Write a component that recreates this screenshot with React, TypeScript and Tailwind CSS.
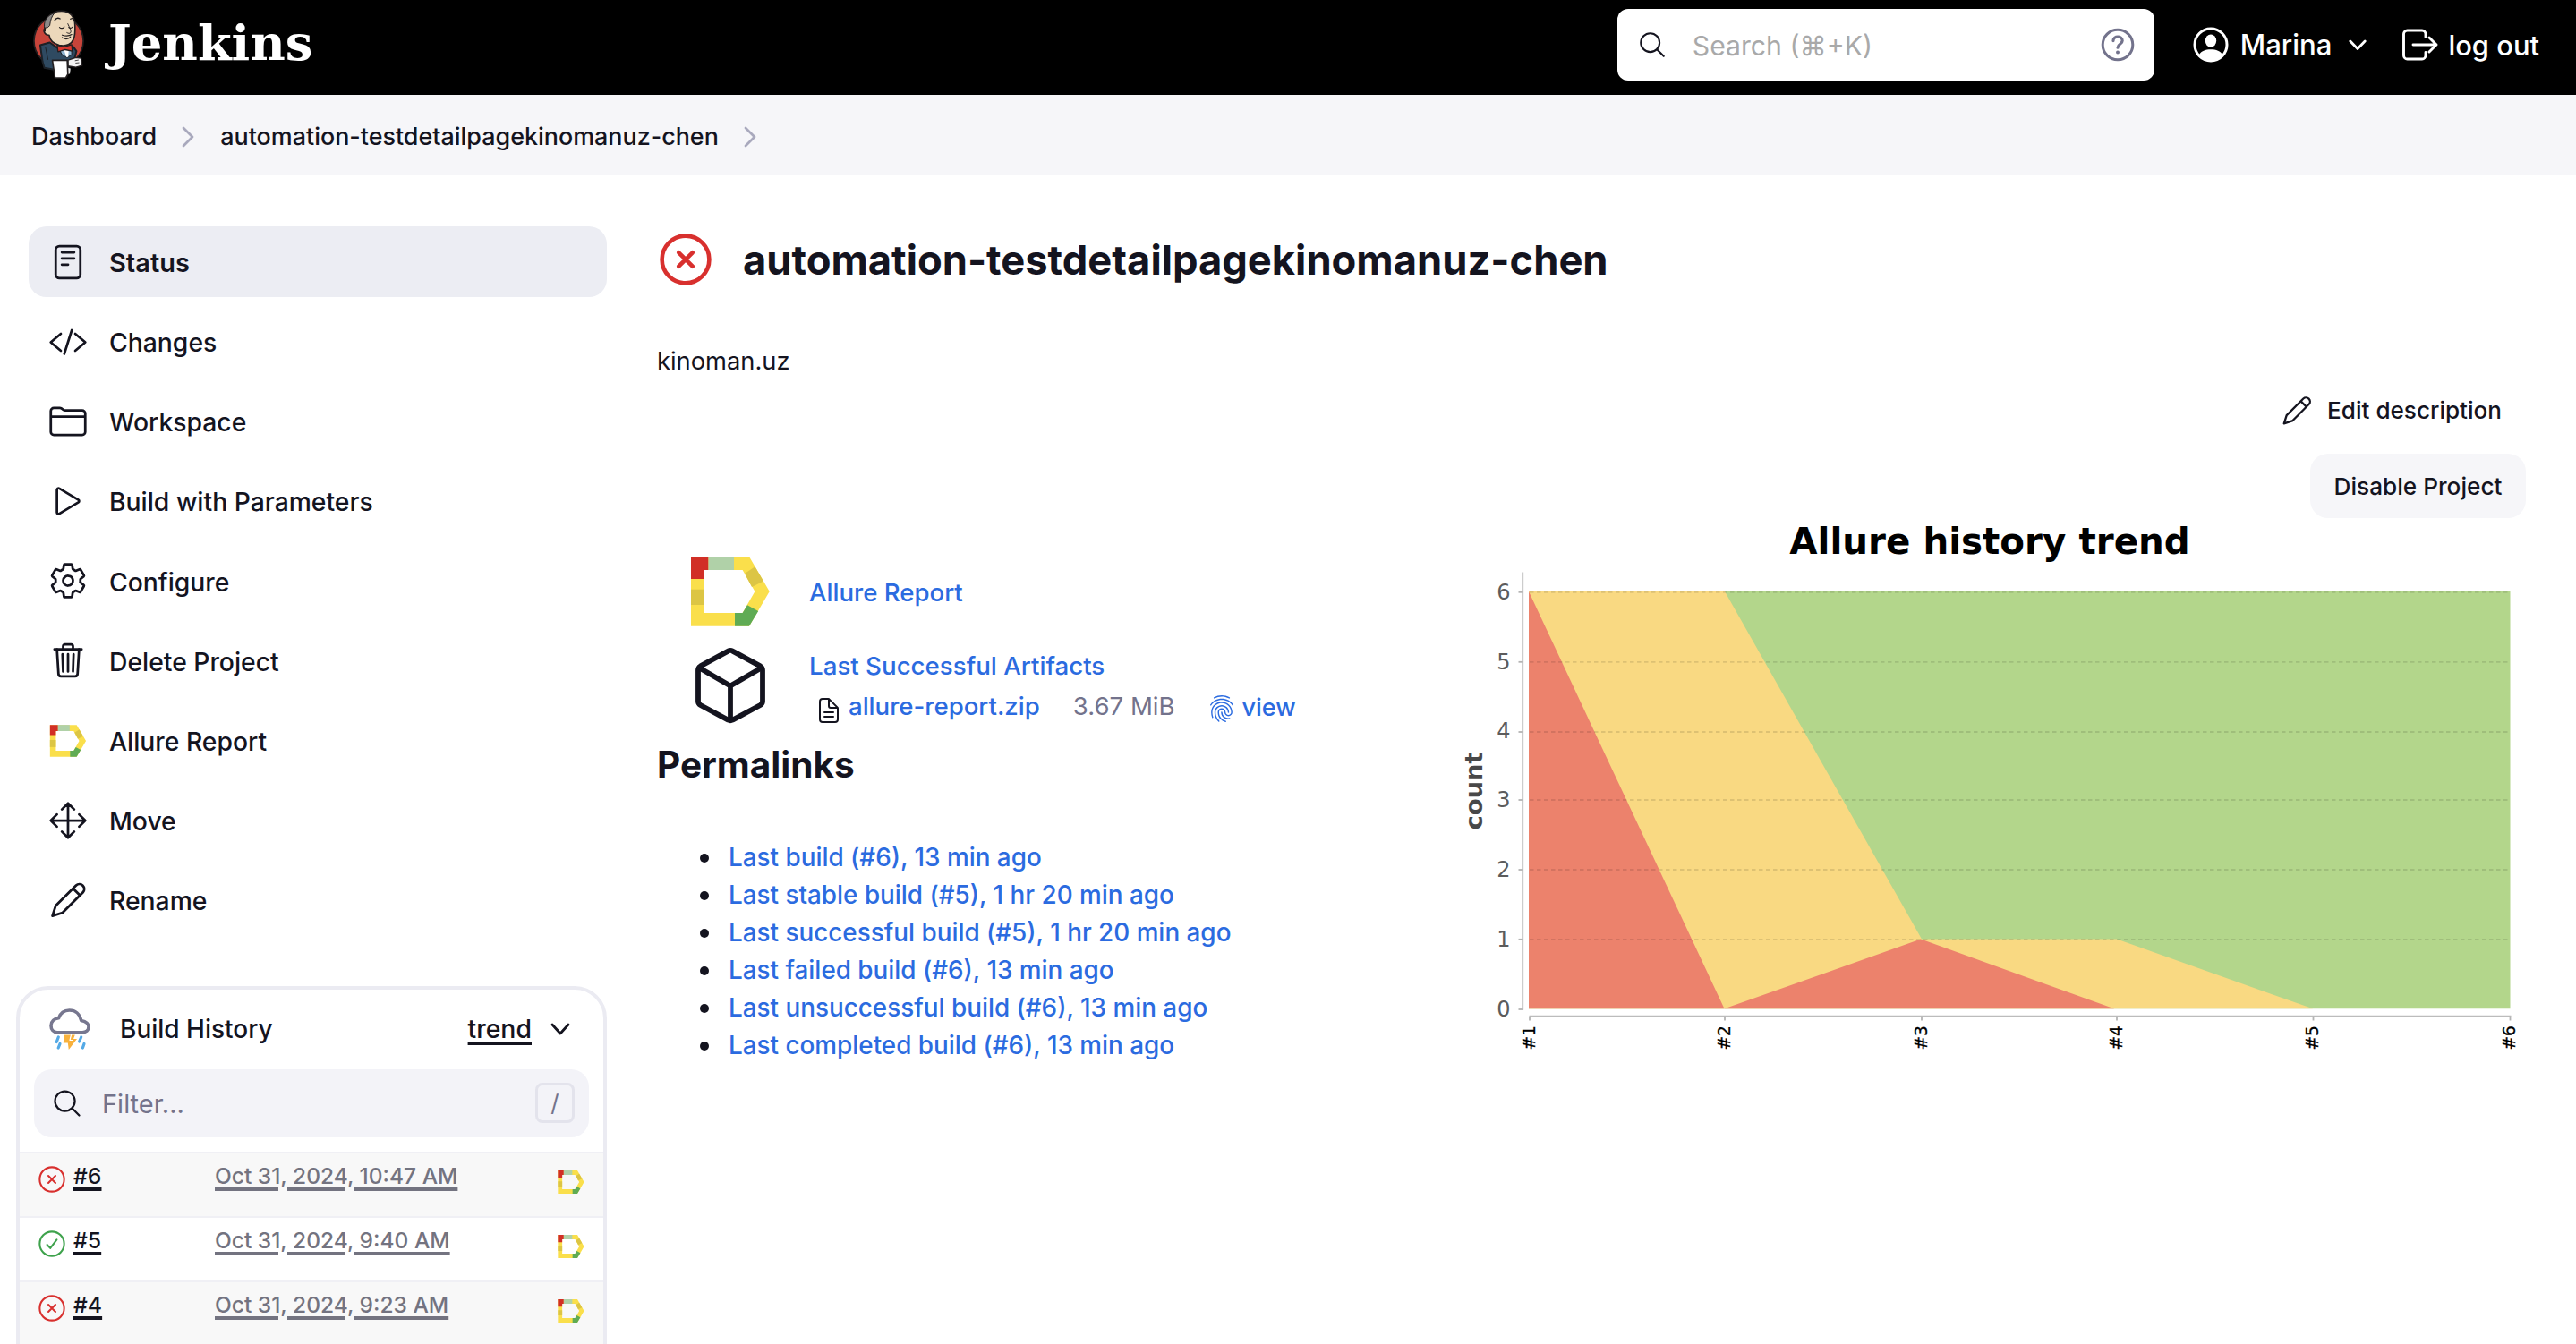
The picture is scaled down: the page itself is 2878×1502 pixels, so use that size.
import type { ReactNode } from "react";
import {
  IoDocumentTextOutline,
  IoFingerPrintOutline,
  IoFolderOutline,
  IoMoveOutline,
  IoPlayOutline,
  IoReaderOutline,
  IoSearchOutline,
  IoSettingsOutline,
  IoTrashOutline,
} from "react-icons/io5";

function Butler() {
  return (
    <svg className="h-[78px] w-[57px] shrink-0" viewBox="49 33 170 235" strokeLinejoin="round" strokeLinecap="round">
      <ellipse cx="134" cy="138" rx="83" ry="84" fill="#c8443a" stroke="#231f20" strokeWidth="5" />
      <path d="M72 152 L104 143 L128 160 L184 158 L194 172 L188 196 L170 206 L166 232 L118 234 L86 228 L80 208 Z" fill="#2f4a61" stroke="#1b2127" strokeWidth="6" />
      <path d="M90 160 L98 200" fill="none" stroke="#1b2127" strokeWidth="3" />
      <path d="M137 166 L178 166 L178 184 L162 194 L146 184 Z" fill="#8db3cf" stroke="#1b2127" strokeWidth="3" />
      <path d="M152 168 L168 166 L166 192 L160 192 Z" fill="#fff" />
      <path d="M88 104 C84 60 110 37 144 37 C172 37 188 56 189 84 C190 108 190 118 184 132 C178 148 160 157 136 152 C116 147 104 136 102 118 C88 120 80 104 88 94 Z" fill="#ecd8bb" stroke="#231f20" strokeWidth="5" />
      <path d="M86 88 C84 68 98 50 120 44 C110 56 107 66 104 86 L98 92 L88 94 Z" fill="#8c8a88" stroke="#231f20" strokeWidth="3" />
      <path d="M121 68 C126 60 134 60 139 63 M174 64 C180 60 184 62 185 66" fill="none" stroke="#231f20" strokeWidth="4" />
      <path d="M137 92 C142 97 150 96 153 90 M168 92 C172 96 177 95 180 91" fill="none" stroke="#231f20" strokeWidth="3.5" />
      <path d="M165 80 C170 92 178 104 174 110 C171 114 166 112 162 110" fill="none" stroke="#231f20" strokeWidth="3" />
      <path d="M146 118 C158 122 168 122 178 116 M146 126 C156 134 168 132 174 124" fill="none" stroke="#231f20" strokeWidth="3.5" />
      <path d="M129 152 L153 158 L178 150 L180 172 L156 167 L132 174 Z" fill="#d8382f" stroke="#231f20" strokeWidth="4" />
      <path d="M166 202 L192 194 L210 196 L213 220 L192 226 L166 222 Z" fill="#f3f3f3" stroke="#231f20" strokeWidth="4" />
      <path d="M190 204 L200 202 M192 212 L202 211" fill="none" stroke="#231f20" strokeWidth="2.5" />
      <path d="M164 228 L174 230 L172 248 L166 250 Z" fill="#e4e4e4" />
      <path d="M113 203 L163 203 L165 250 L158 262 L122 262 Z" fill="#fff" stroke="#231f20" strokeWidth="5" />
    </svg>
  );
}

function AllureMark({ className }: { className: string }) {
  return (
    <svg className={className} viewBox="-4 -9 96 96">
      <path d="M0 0H65L87.7 39L65 77.7H0Z M14.4 15V63H57.6L71.4 39L57.6 15Z" fill="#fadf4b" fillRule="evenodd" />
      <path d="M0 0H19.5V15H14.4V25H0Z" fill="#d12f26" />
      <path d="M19.5 0H48V15H19.5Z" fill="#b0d1a8" />
      <path d="M0 36.7H14.4V54H0Z" fill="#dcc544" />
      <path d="M60 19L71.5 11.2L81 27.5L68 34Z" fill="#dcc544" />
      <path d="M49 63H57.6L63 54.2L75.2 61L65 77.7H49Z" fill="#5fab54" />
    </svg>
  );
}

function Pencil({ className }: { className: string }) {
  return (
    <svg className={className} viewBox="0 0 44 44" fill="none" stroke="currentColor" strokeWidth="2.8" strokeLinejoin="round">
      <path d="M4.6 39.6L8.2 28.3L31 5.5A5.45 5.45 0 0 1 38.7 13.2L15.9 36Z" />
      <path d="M27.6 9L35.2 16.6" />
    </svg>
  );
}

function CodeSlash({ className }: { className: string }) {
  return (
    <svg className={className} viewBox="0 0 44 44" fill="none" stroke="currentColor" strokeWidth="2.7" strokeLinecap="round" strokeLinejoin="round">
      <path d="M14 13L2.7 22.5L14 32M30 13L41.3 22.5L30 32M26.2 9L17.8 35.5" />
    </svg>
  );
}

function Failed({ className, thin = false }: { className: string; thin?: boolean }) {
  return (
    <svg className={className} viewBox="0 0 58 58" fill="none" stroke="#d8302e" strokeWidth={thin ? 4 : 4.6} strokeLinecap="round">
      <circle cx="29" cy="29" r="26.4" />
      <path d="M21.3 21.3L36.7 36.7M36.7 21.3L21.3 36.7" />
    </svg>
  );
}

function Passed({ className }: { className: string }) {
  return (
    <svg className={className} viewBox="0 0 58 58" fill="none" stroke="#3ea24c" strokeWidth="4" strokeLinecap="round" strokeLinejoin="round">
      <circle cx="29" cy="29" r="26.4" />
      <path d="M18.5 31L25.5 38.5L39.5 20" />
    </svg>
  );
}

function Storm() {
  return (
    <svg className="h-[47px] w-[46px] shrink-0" viewBox="0 0 46 47" fill="none" strokeLinecap="round" strokeLinejoin="round">
      <path d="M9 26.7C4.6 26.7 2 23.5 2 19.2C2 14.5 5 11.7 10.5 10.8C12.5 5 16.8 2 22.5 2C29.3 2 34.3 6.3 35.7 13.4C41 14.4 44 16.5 44 20.5C44 24.5 41 26.7 37 26.7Z" stroke="#77778f" strokeWidth="3.6" />
      <path d="M10.3 32L8.2 37.5M12 39.5L10.2 44M35.7 32L33.6 37M39 39.5L37.4 44" stroke="#55aae6" strokeWidth="3.2" />
      <path d="M16.5 29.5H28.8L27 34H31L21.8 46L20.8 38.5H15.8Z" fill="#f8b13c" />
      <path d="M24.5 29.5L23 35.5H26" stroke="#fff" strokeWidth="1.2" />
    </svg>
  );
}

function Cube() {
  return (
    <svg className="h-24 w-24 shrink-0" viewBox="-9 -6 96 96" fill="none" stroke="#14141f" strokeWidth="5.8" strokeLinecap="round" strokeLinejoin="round">
      <path d="M36.5 3.6a5 5 0 0 1 5 0L72.4 20.4a5.2 5.2 0 0 1 2.6 4.5V59.5a5.2 5.2 0 0 1-2.6 4.5L41.5 80.6a5 5 0 0 1-5 0L5.6 64A5.2 5.2 0 0 1 3 59.5V24.9a5.2 5.2 0 0 1 2.6-4.5Z" />
      <path d="M4.5 22.5L39 42.5L73.5 22.5M39 42.5V80.5" />
    </svg>
  );
}

function Chevron({ className, d, box }: { className: string; d: string; box: string }) {
  return (
    <svg className={className} viewBox={box} fill="none" stroke="currentColor" strokeWidth="2.8" strokeLinecap="round" strokeLinejoin="round">
      <path d={d} />
    </svg>
  );
}

const tasks: { label: string; icon: ReactNode; active?: boolean }[] = [
  { label: "Status", icon: <IoReaderOutline className="size-11" />, active: true },
  { label: "Changes", icon: <CodeSlash className="size-11" /> },
  { label: "Workspace", icon: <IoFolderOutline className="size-11" /> },
  { label: "Build with Parameters", icon: <IoPlayOutline className="size-11" /> },
  { label: "Configure", icon: <IoSettingsOutline className="size-11" /> },
  { label: "Delete Project", icon: <IoTrashOutline className="size-11" /> },
  { label: "Allure Report", icon: <AllureMark className="size-11" /> },
  { label: "Move", icon: <IoMoveOutline className="size-11" /> },
  { label: "Rename", icon: <Pencil className="size-11" /> },
];

const builds = [
  { id: "#6", date: "Oct 31, 2024, 10:47 AM", ok: false },
  { id: "#5", date: "Oct 31, 2024, 9:40 AM", ok: true },
  { id: "#4", date: "Oct 31, 2024, 9:23 AM", ok: false },
];

const permalinks = [
  "Last build (#6), 13 min ago",
  "Last stable build (#5), 1 hr 20 min ago",
  "Last successful build (#5), 1 hr 20 min ago",
  "Last failed build (#6), 13 min ago",
  "Last unsuccessful build (#6), 13 min ago",
  "Last completed build (#6), 13 min ago",
];

const yTicks = [661.8, 739.8, 818, 894, 972, 1049.8, 1128];
const xTicks = [1709, 1927, 2147, 2365, 2584.5, 2804.5];

function TrendChart() {
  return (
    <svg className="h-[611px] w-[1202px] shrink-0" viewBox="1620 579 1202 611" fontFamily="'DejaVu Sans', sans-serif">
      <text x="2223" y="618.5" fontSize="40.4" fontWeight="700" textAnchor="middle">Allure history trend</text>
      <path d="M1708 661H2804.5V1127.3H1708Z" fill="#b3d68b" />
      <path d="M1708 661H1927L2147 1049.5H2365L2584 1127.3H1708Z" fill="#f9d982" />
      <path d="M1708 661L1926.5 1127.3L2146 1049.5L2362 1127.3H1708Z" fill="#ec826c" />
      {yTicks.map((y, i) => (
        <g key={y}>
          {i < 6 && <path d={`M1709 ${y}H2804`} stroke="#000" strokeOpacity="0.11" strokeWidth="1.8" strokeDasharray="4.5 3.5" />}
          <path d={`M1696.5 ${y}H1702`} stroke="#b4b4b4" strokeWidth="1.8" />
          <text x="1687.5" y={i === 2 ? y + 7 : y + 8.3} fontSize="24" fill="#5c5c5c" textAnchor="end">{6 - i}</text>
        </g>
      ))}
      <path d="M1701.2 639.5V1128.8M1708.5 1135.8H2805.5" stroke="#bcbcbc" strokeWidth="1.9" fill="none" />
      {xTicks.map((x, i) => (
        <g key={x}>
          <path d={`M${x} 1135.8V1140.5`} stroke="#b4b4b4" strokeWidth="1.8" />
          <text transform={`translate(${x + 5.8} 1173.5) rotate(-90)`} fontSize="18.6" stroke="#000" strokeWidth="0.3">#{i + 1}</text>
        </g>
      ))}
      <text transform="translate(1655.8 927.5) rotate(-90)" fontSize="27.4" fontWeight="700" fill="#484848">count</text>
    </svg>
  );
}

export default function App() {
  return (
    <div className="h-[1502px] w-[2878px] overflow-hidden bg-white font-['Inter','Liberation_Sans',sans-serif] text-[#14141f]">
      <header className="flex h-[106px] items-center bg-black pr-[41px] pb-[6px] pl-[37px] text-white">
        <Butler />
        <span className="-mt-1 ml-[27px] font-['DejaVu_Serif',serif] text-[54.4px] leading-none font-bold">Jenkins</span>
        <div className="ml-auto flex h-20 w-[600px] items-center rounded-xl bg-white pr-[22px] pl-[22px]">
          <IoSearchOutline className="size-[34px] text-[#14141f]" />
          <span className="ml-[28px] pt-[2px] text-[30.2px] leading-none text-[#a9a9a9]">Search (⌘+K)</span>
          <svg className="ml-auto size-[38px]" viewBox="0 0 38 38" fill="none" stroke="#73738c" strokeLinecap="round">
            <circle cx="19" cy="19" r="16.8" strokeWidth="3" />
            <path d="M14 14.6C14 8.7 24.2 8.7 24.2 14.6C24.2 18.4 19 18.2 19 22.2" strokeWidth="3.2" />
            <circle cx="19" cy="27.4" r="2" fill="#73738c" stroke="none" />
          </svg>
        </div>
        <svg className="ml-[43px] size-10" viewBox="0 0 40 40">
          <circle cx="20" cy="20" r="18" fill="none" stroke="#fff" strokeWidth="3" />
          <ellipse cx="20" cy="15.6" rx="6.2" ry="7.2" fill="#fff" />
          <path d="M7 31C9 27 14 25.2 20 25.2S31 27 33 31C29.5 36 25 38 20 38S10.5 36 7 31Z" fill="#fff" />
        </svg>
        <span className="ml-[13px] pt-[2px] text-[31.1px] leading-none font-medium">Marina</span>
        <Chevron className="ml-[19px] h-3 w-5" box="0 0 20 12" d="M1.8 2L10 10.4L18.2 2" />
        <svg className="ml-[40px] h-9 w-10" viewBox="0 0 40 36" fill="none" stroke="#fff" strokeWidth="2.9" strokeLinecap="round" strokeLinejoin="round">
          <path d="M26 9.5V6A4 4 0 0 0 22 2H5.5A4 4 0 0 0 1.5 6V30A4 4 0 0 0 5.5 34H22A4 4 0 0 0 26 30V26.5" />
          <path d="M12 18H38M30 10L38 18L30 26" />
        </svg>
        <span className="ml-[11px] pt-[2px] text-[30.9px] leading-none font-medium">log out</span>
      </header>

      <nav className="flex h-[90px] items-center bg-[#f6f6f9] pt-[3px] pl-[35px] text-[26.9px] leading-none font-medium">
        <span>Dashboard</span>
        <Chevron className="ml-[28px] h-6 w-3.5 text-[#a9a9bd]" box="0 0 14 24" d="M2 2L12 12L2 22" />
        <span className="ml-[29px]">automation-testdetailpagekinomanuz-chen</span>
        <Chevron className="ml-[28px] h-6 w-3.5 text-[#a9a9bd]" box="0 0 14 24" d="M2 2L12 12L2 22" />
      </nav>

      <div className="flex pt-[57px]">
        <aside className="w-[734px] shrink-0">
          <div className="ml-8 flex w-[646px] flex-col gap-[10.2px]">
            {tasks.map((t) => (
              <div
                key={t.label}
                className={
                  t.active
                    ? "flex h-[79px] items-center rounded-[20px] bg-[#ecedf3] pl-[22px] font-semibold"
                    : "flex h-[79px] items-center rounded-[20px] pl-[22px] font-medium"
                }
              >
                {t.icon}
                <span className={t.active ? "ml-[24px] pt-[2px] text-[29px] leading-none" : "ml-[24px] pt-[3px] text-[28.3px] leading-none"}>{t.label}</span>
              </div>
            ))}
          </div>

          <section className="mt-[56px] ml-[18px] h-[440px] w-[660px] overflow-hidden rounded-[36px] border-4 border-[#ebebf2]">
            <div className="flex h-[89px] items-center pr-[37px] pl-[33px]">
              <Storm />
              <span className="ml-[33px] text-[28px] leading-none font-medium">Build History</span>
              <span className="ml-auto text-[28.4px] leading-[40px] font-medium underline decoration-[4px] underline-offset-[4px]">trend</span>
              <Chevron className="ml-[21px] h-[14px] w-[22px]" box="0 0 22 14" d="M2 2L11 12L20 2" />
            </div>
            <div className="mx-4 flex h-[76px] items-center rounded-[20px] bg-[#f3f3f8] pr-4 pl-[19px]">
              <IoSearchOutline className="size-9" />
              <span className="ml-[21px] pt-[2px] text-[29px] leading-none text-[#73738c]">Filter...</span>
              <kbd className="ml-auto flex h-[45px] w-11 items-center justify-center rounded-lg border-[3px] border-[#e3e3ec] font-['Inter',sans-serif] text-[26px] leading-none text-[#73738c]">/</kbd>
            </div>
            <div className="mt-4">
              {builds.map((b) => (
                <div key={b.id} className="flex h-[72px] items-start border-t-2 border-[#f0f0f5] pr-5 pl-[21px] odd:bg-[#f8f8f8]">
                  {b.ok ? <Passed className="mt-[14px] size-[30px]" /> : <Failed thin className="mt-[14px] size-[30px]" />}
                  <div className="mt-[9px] ml-[9px] w-[158px] text-[24.8px] leading-[32px] font-medium underline decoration-[4px] underline-offset-[4px]">{b.id}</div>
                  <div className="mt-[9px] text-[24.5px] leading-[32px] font-medium text-[#737380] underline decoration-[4px] underline-offset-[4px]">{b.date}</div>
                  <AllureMark className="mt-4 ml-auto size-8" />
                </div>
              ))}
            </div>
          </section>
        </aside>

        <main className="w-[2088px]">
          <div className="flex h-[74px] items-center">
            <Failed className="ml-[3px] size-[58px]" />
            <h1 className="ml-[35px] pt-px text-[45.3px] leading-none font-bold">automation-testdetailpagekinomanuz-chen</h1>
          </div>
          <p className="mt-[57px] text-[27.3px] leading-[40px]">kinoman.uz</p>
          <div className="mt-[14px] flex h-[42px] items-center justify-end pr-[27px]">
            <Pencil className="size-9" />
            <span className="ml-4 pt-px text-[26.1px] leading-none font-medium">Edit description</span>
          </div>
          <div className="mt-[27px] flex justify-end">
            <button className="flex h-[72px] w-[241px] items-center justify-center rounded-[20px] bg-[#f6f6f9] pt-[2px] text-[26.2px] leading-none font-medium">Disable Project</button>
          </div>

          <div className="flex">
            <div className="w-[886px] pt-[34px]">
              <div className="ml-[34px] flex items-center text-[#2b6be0]">
                <AllureMark className="size-24" />
                <span className="ml-[40px] pt-[3px] text-[27.6px] leading-none font-medium">Allure Report</span>
              </div>
              <div className="mt-[9px] ml-[34px] flex items-start">
                <Cube />
                <div className="ml-[40px]">
                  <div className="mt-[6px] text-[27.7px] leading-[40px] font-medium text-[#2b6be0]">Last Successful Artifacts</div>
                  <div className="mt-[6px] flex h-[40px] items-center pl-[6px] text-[27.6px] leading-none">
                    <IoDocumentTextOutline className="mt-2 size-8" />
                    <span className="ml-[6px] font-medium text-[#2b6be0]">allure-report.zip</span>
                    <span className="ml-[37px] text-[#73738c]">3.67 MiB</span>
                    <IoFingerPrintOutline className="mt-1 ml-[36px] size-8 text-[#2b6be0]" />
                    <span className="ml-[7px] text-[27px] font-medium text-[#2b6be0]">view</span>
                  </div>
                </div>
              </div>
              <h2 className="mt-[16px] text-[40.5px] leading-[50px] font-bold">Permalinks</h2>
              <ul className="mt-[58px] pl-[48px]">
                {permalinks.map((p) => (
                  <li key={p} className="flex h-[42px] items-center text-[27.85px] leading-none font-medium text-[#2b6be0]">
                    <span className="mr-[22px] size-[10px] rounded-full bg-[#14141f]" />
                    {p}
                  </li>
                ))}
              </ul>
            </div>
            <TrendChart />
          </div>
        </main>
      </div>
    </div>
  );
}
